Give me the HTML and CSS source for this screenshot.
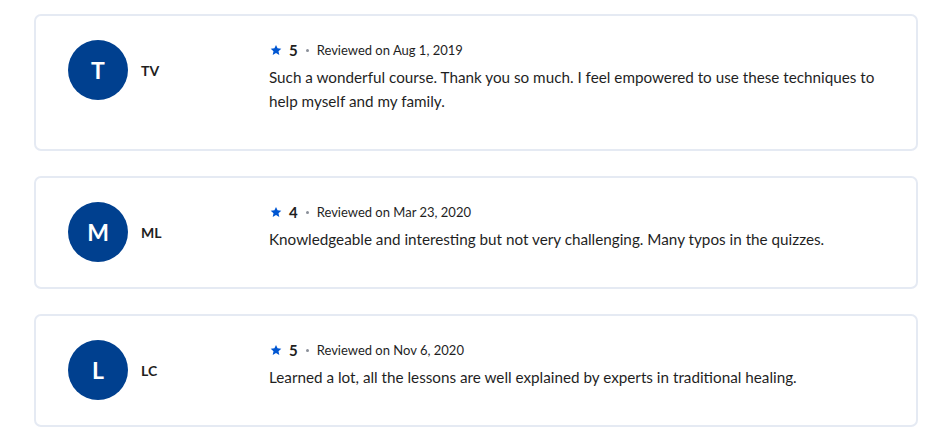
FILE: index.html
```html
<!DOCTYPE html>
<html lang="en">
<head>
<meta charset="utf-8">
<title>Reviews</title>
<link rel="stylesheet" href="styles.css">
</head>
<body>
<div class="reviews">
  <div class="card">
    <div class="author">
      <div class="avatar">T</div>
      <div class="name">TV</div>
    </div>
    <div class="body">
      <div class="meta">
        <svg class="star" viewBox="0 0 24 24" aria-hidden="true"><path d="M12 1.8l3.1 6.9 7.5.8-5.6 5.1 1.6 7.4L12 18.2 5.4 22l1.6-7.4L1.4 9.5l7.5-.8z"/></svg>
        <span class="score">5</span>
        <span class="dot"></span>
        <span class="date">Reviewed on Aug 1, 2019</span>
      </div>
      <p class="text">Such a wonderful course. Thank you so much. I feel empowered to use these techniques to help myself and my family.</p>
    </div>
  </div>
  <div class="card">
    <div class="author">
      <div class="avatar">M</div>
      <div class="name">ML</div>
    </div>
    <div class="body">
      <div class="meta">
        <svg class="star" viewBox="0 0 24 24" aria-hidden="true"><path d="M12 1.8l3.1 6.9 7.5.8-5.6 5.1 1.6 7.4L12 18.2 5.4 22l1.6-7.4L1.4 9.5l7.5-.8z"/></svg>
        <span class="score">4</span>
        <span class="dot"></span>
        <span class="date">Reviewed on Mar 23, 2020</span>
      </div>
      <p class="text">Knowledgeable and interesting but not very challenging. Many typos in the quizzes.</p>
    </div>
  </div>
  <div class="card">
    <div class="author">
      <div class="avatar">L</div>
      <div class="name">LC</div>
    </div>
    <div class="body">
      <div class="meta">
        <svg class="star" viewBox="0 0 24 24" aria-hidden="true"><path d="M12 1.8l3.1 6.9 7.5.8-5.6 5.1 1.6 7.4L12 18.2 5.4 22l1.6-7.4L1.4 9.5l7.5-.8z"/></svg>
        <span class="score">5</span>
        <span class="dot"></span>
        <span class="date">Reviewed on Nov 6, 2020</span>
      </div>
      <p class="text">Learned a lot, all the lessons are well explained by experts in traditional healing.</p>
    </div>
  </div>
</div>
</body>
</html>
```
FILE: styles.css
```css
* { box-sizing: border-box; }
html, body { margin: 0; padding: 0; background: #ffffff; }
body {
  font-family: "Lato", "Liberation Sans", sans-serif;
  color: #1f1f1f;
}
.reviews {
  padding: 14px 30px 0 34px;
  display: flex;
  flex-direction: column;
  gap: 25px;
}
.card {
  border: 2px solid #e5eaf3;
  border-radius: 7px;
  padding: 24px 31px 24px 32px;
  display: grid;
  grid-template-columns: 201px 1fr;
  align-items: start;
}
.author {
  display: flex;
  align-items: center;
  gap: 13px;
}
.avatar {
  width: 60px;
  height: 60px;
  border-radius: 50%;
  background: #00408f;
  color: #fff;
  display: flex;
  align-items: center;
  justify-content: center;
  font-size: 23px;
  font-weight: 700;
}
.name {
  font-size: 14px;
  font-weight: 700;
}
.body { padding-bottom: 12px; }
.meta {
  height: 20px;
  display: flex;
  align-items: center;
  margin-bottom: 5px;
  padding-left: 1px;
}
.star { width: 12px; height: 12px; fill: #0056d2; }
.score {
  margin-left: 7px;
  font-size: 15px;
  font-weight: 700;
}
.dot {
  width: 3px;
  height: 3px;
  border-radius: 50%;
  background: #8a8f99;
  margin: 0 8px 0 8px;
}
.date { font-size: 13px; }
.text {
  margin: 0;
  font-size: 15.25px;
  line-height: 24px;
}
```
